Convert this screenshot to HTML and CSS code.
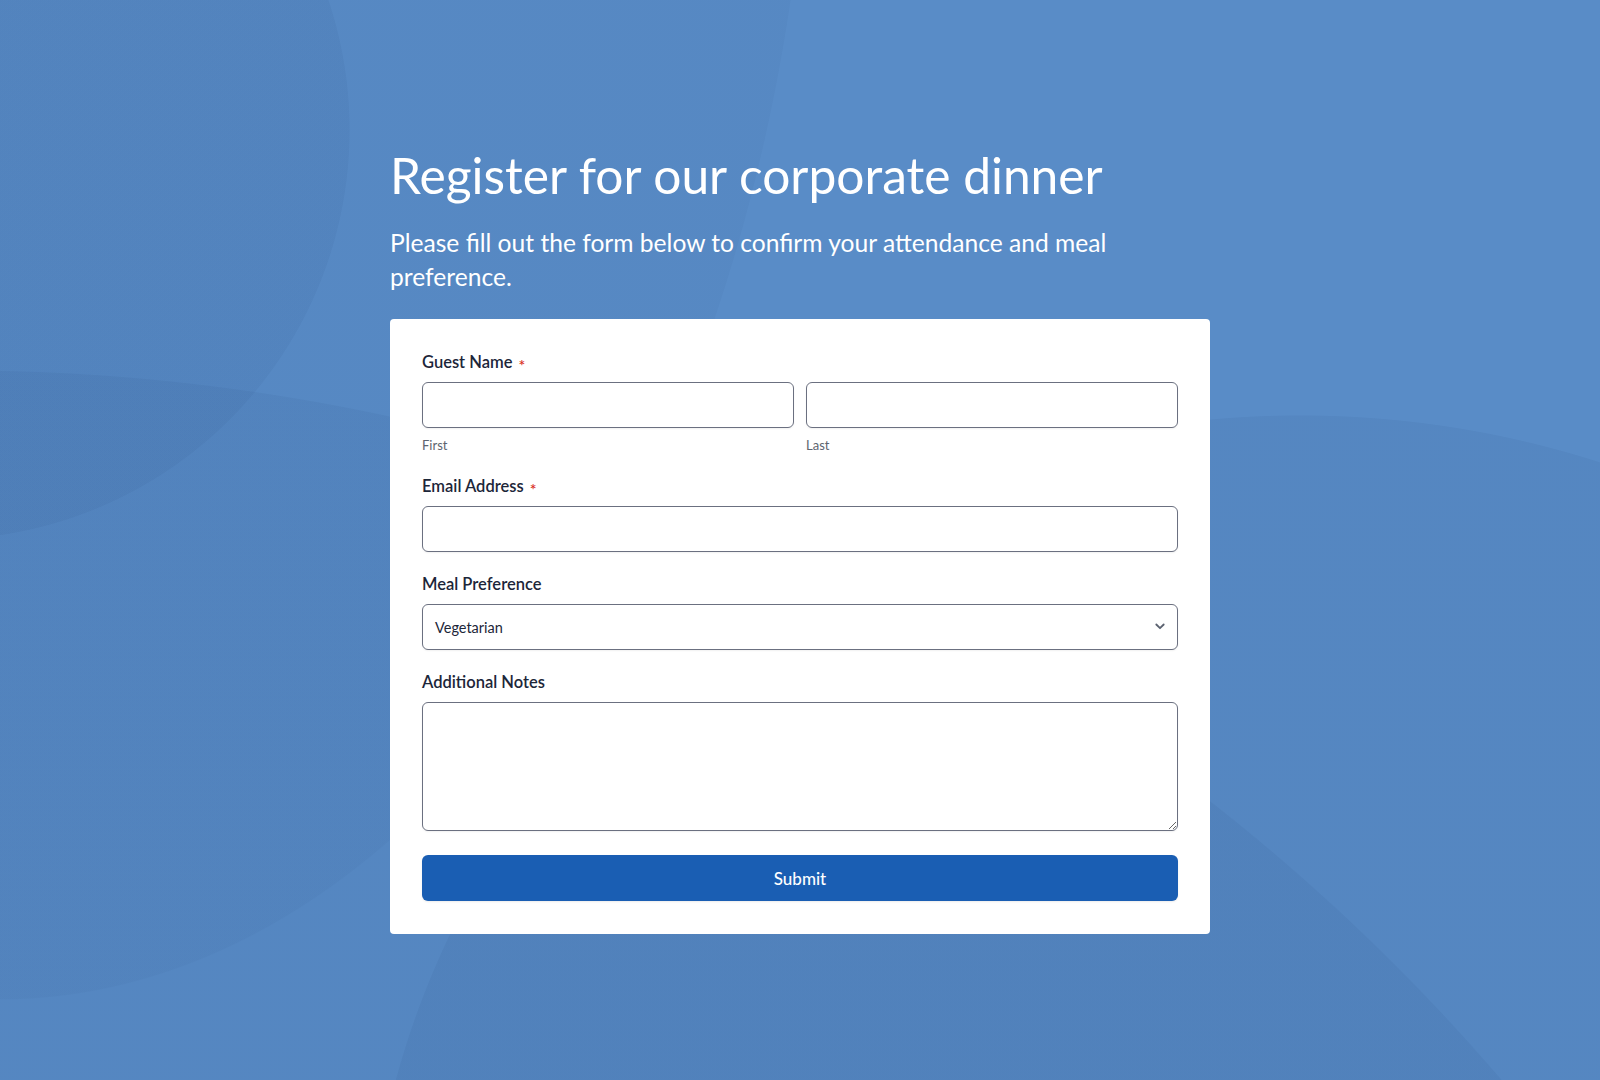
FILE: index.html
```html
<!DOCTYPE html>
<html lang="en">
<head>
<meta charset="utf-8">
<title>Register for our corporate dinner</title>
<link rel="stylesheet" href="styles.css">
</head>
<body>
<main class="page">
  <div class="wrap">
    <h1 class="title">Register for our corporate dinner</h1>
    <p class="subtitle">Please fill out the form below to confirm your attendance and meal preference.</p>
    <form class="card">
      <div class="field">
        <label class="label">Guest Name <span class="req">*</span></label>
        <div class="name-row">
          <div class="name-col">
            <input class="input" type="text">
            <span class="sub">First</span>
          </div>
          <div class="name-col">
            <input class="input" type="text">
            <span class="sub">Last</span>
          </div>
        </div>
      </div>
      <div class="field">
        <label class="label">Email Address <span class="req">*</span></label>
        <input class="input" type="email">
      </div>
      <div class="field">
        <label class="label">Meal Preference</label>
        <div class="select-wrap">
          <div class="select">Vegetarian</div>
          <svg class="chev" width="10" height="7" viewBox="0 0 10 7"><path d="M1.3 1.5 5 5.2l3.7-3.7" fill="none" stroke="#5b6270" stroke-width="1.8" stroke-linecap="round" stroke-linejoin="round"/></svg>
        </div>
      </div>
      <div class="field">
        <label class="label">Additional Notes</label>
        <textarea class="textarea"></textarea>
      </div>
      <button class="submit" type="button">Submit</button>
    </form>
  </div>
</main>
</body>
</html>
```
FILE: styles.css
```css
* { box-sizing: border-box; }
html, body { margin: 0; padding: 0; }
body {
  font-family: Lato, "Noto Sans", sans-serif;
  min-height: 100vh;
  background-color: #598cc7;
  background-image:
    radial-gradient(circle 410px at -60px 130px, rgba(20,50,100,0.055) 99.8%, rgba(20,50,100,0) 100%),
    radial-gradient(ellipse 813px 1300px at 0px -300px, rgba(20,50,100,0.04) 99.9%, rgba(20,50,100,0) 100%),
    radial-gradient(circle 2030px at -40px 2400px, rgba(20,50,100,0.06) 99.95%, rgba(20,50,100,0) 100%),
    radial-gradient(ellipse 934px 885px at 1300px 1300px, rgba(20,50,100,0.06) 99.9%, rgba(20,50,100,0) 100%);
  background-repeat: no-repeat;
}
.page {
  min-height: 100vh;
  display: flex;
  align-items: center;
  justify-content: center;
}
.wrap {
  width: 820px;
}
.title {
  margin: 0;
  font-size: 49.7px;
  font-weight: 400;
  line-height: 58px;
  color: #ffffff;
}
.subtitle {
  margin: 22px 0 0;
  font-size: 24.6px;
  line-height: 33.6px;
  color: #ffffff;
  font-weight: 400;
  max-width: 740px;
}
.card {
  margin-top: 25px;
  background: #ffffff;
  border-radius: 4px;
  padding: 31px 32px 33px;
  display: flex;
  flex-direction: column;
  gap: 20px;
}
.field {
  display: flex;
  flex-direction: column;
}
.label {
  display: block;
  height: 24px;
  font-size: 16.5px;
  line-height: 24px;
  font-weight: 600;
  color: #1c2639;
  margin-bottom: 8px;
}
.req {
  color: #d93025;
  font-size: 16px;
  line-height: 0;
  margin-left: 2px;
  vertical-align: -3px;
}
.name-row {
  display: flex;
  gap: 12px;
}
.name-col {
  flex: 1;
  display: flex;
  flex-direction: column;
}
.sub {
  margin-top: 8px;
  font-size: 13px;
  line-height: 18px;
  color: #5d6470;
}
.input, .select, .textarea {
  display: block;
  width: 100%;
  height: 46px;
  border: 1px solid #6b7080;
  border-radius: 6px;
  background: #fff;
  font-family: Lato, "Noto Sans", sans-serif;
  font-size: 14.5px;
  color: #1c2639;
  box-shadow: 0 1px 2px rgba(0,0,0,0.06);
  outline: none;
}
.select-wrap {
  position: relative;
}
.select {
  padding: 2px 0 0 12px;
  line-height: 42px;
}
.chev {
  position: absolute;
  right: 13px;
  top: 19px;
}
.textarea {
  height: 129px;
  resize: vertical;
  margin: 0;
}
.submit {
  margin-top: 4px;
  height: 46px;
  width: 100%;
  border: none;
  border-radius: 6px;
  padding-top: 3px;
  background: #1a5eb3;
  color: #fff;
  font-family: Lato, "Noto Sans", sans-serif;
  font-size: 17px;
  font-weight: 500;
  box-shadow: 0 1px 2px rgba(0,0,0,0.08);
}
```
